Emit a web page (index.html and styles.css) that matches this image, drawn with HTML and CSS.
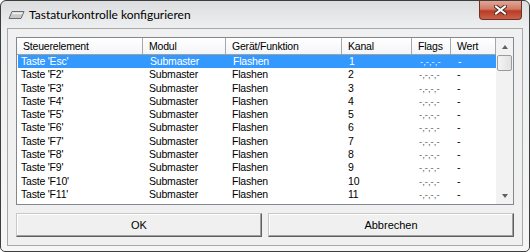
FILE: index.html
```html
<!DOCTYPE html>
<html>
<head>
    <title>Tastaturkontrolle konfigurieren</title>
    <meta charset="UTF-8" />
    <link rel="stylesheet" href="styles.css">
</head>
<body>
    <div class="window">
        <div class="titlebar">
            <svg class="app-icon" width="17" height="10" viewBox="0 0 17 10">
                <polygon points="4,1.5 16,1.5 13,8.5 1,8.5" fill="#c9c9c9" stroke="#6b6b6b" stroke-width="1"/>
                <polygon points="4.5,2.5 15,2.5 14.2,4.2 3.7,4.2" fill="#efefef"/>
            </svg>
            <span class="title">Tastaturkontrolle konfigurieren</span>
            <div class="close-btn">
                <svg width="13" height="10" viewBox="0 0 13 10">
                    <path d="M2 1.5 L11 8.5 M11 1.5 L2 8.5" stroke="#4a2a24" stroke-width="4" stroke-linecap="square"/>
                    <path d="M2 1.5 L11 8.5 M11 1.5 L2 8.5" stroke="#fff" stroke-width="2" stroke-linecap="square"/>
                </svg>
            </div>
        </div>

        <div class="client">
            <div class="listview">
                <div class="lv-main">
                    <div class="lv-header">
                        <div class="hcell">Steuerelement</div>
                        <div class="hcell">Modul</div>
                        <div class="hcell">Gerät/Funktion</div>
                        <div class="hcell">Kanal</div>
                        <div class="hcell">Flags</div>
                        <div class="hcell">Wert</div>
                    </div>
                    <div class="lv-rows" id="rows"></div>
                </div>
                <div class="scrollbar">
                    <div class="sb-btn"><span class="arrow-up"></span></div>
                    <div class="sb-thumb"></div>
                    <div class="sb-btn sb-down"><span class="arrow-down"></span></div>
                </div>
            </div>

            <div class="buttons">
                <button class="btn">OK</button>
                <button class="btn">Abbrechen</button>
            </div>
        </div>
    </div>

    <script>
        const keys = ["Esc", "F2", "F3", "F4", "F5", "F6", "F7", "F8", "F9", "F10", "F11"];
        const rows = document.getElementById("rows");

        keys.forEach((key, i) => {
            const row = document.createElement("div");
            row.className = i === 0 ? "row sel" : "row";
            row.innerHTML =
                "<div class='cell first'>Taste '" + key + "'</div>" +
                "<div class='cell'>Submaster</div>" +
                "<div class='cell'>Flashen</div>" +
                "<div class='cell'>" + (i + 1) + "</div>" +
                "<div class='cell flags'>-,-,-,-</div>" +
                "<div class='cell'>-</div>";
            rows.appendChild(row);
        });
    </script>
</body>
</html>
```

FILE: styles.css
```css
body {
    margin: 0;
    font-family: "Liberation Sans", Arial, sans-serif;
}

.window {
    width: 530px;
    height: 252px;
    box-sizing: border-box;
    border: 1px solid #3d3d3d;
    border-radius: 6px 6px 5px 5px;
    background: linear-gradient(#dcdddf, #eeeff0 27px, #f6f6f6);
    padding: 0 6px 5px 6px;
    display: flex;
    flex-direction: column;
}

.titlebar {
    height: 27px;
    flex: none;
    display: flex;
    align-items: center;
}

.app-icon {
    margin-left: 1px;
    margin-right: 4px;
    margin-top: 1px;
}

.title {
    font-family: Lato, "Noto Sans", sans-serif;
    font-size: 12px;
    color: #000;
    margin-top: -1px;
}

.close-btn {
    margin-left: auto;
    margin-right: 1px;
    align-self: flex-start;
    width: 43px;
    height: 19px;
    box-sizing: border-box;
    border: 1px solid #6e2f25;
    border-top: none;
    border-radius: 0 0 4px 4px;
    background: linear-gradient(#e3a596, #d07a66 45%, #bb3b25 55%, #c9614a);
    display: flex;
    align-items: center;
    justify-content: center;
}

.client {
    flex: 1;
    border: 1px solid #a8a8a8;
    background: #f0f0f0;
    padding: 8px;
    display: flex;
    flex-direction: column;
    gap: 8px;
}

.listview {
    height: 168px;
    flex: none;
    box-sizing: border-box;
    border: 1px solid #828790;
    background: #fff;
    display: flex;
    font-size: 10.5px;
    letter-spacing: -0.2px;
}

.lv-main {
    width: 479px;
    overflow: hidden;
}

.lv-header,
.row {
    display: grid;
    grid-template-columns: 126px 83px 116px 70px 39px 45px;
}

.lv-header {
    height: 17px;
    box-sizing: border-box;
    border-bottom: 1px solid #a0a0a0;
    background: linear-gradient(#ffffff, #f4f5f7);
}

.hcell {
    border-right: 1px solid #a7a7a7;
    padding-left: 6px;
    line-height: 16px;
    white-space: nowrap;
    overflow: hidden;
}

.row {
    height: 13.3px;
    line-height: 13.3px;
    color: #000;
}

.row.sel {
    background: #3399ff;
    color: #fff;
    margin-left: 1px;
}

.cell {
    padding-left: 6px;
    white-space: nowrap;
    overflow: hidden;
}

.cell.first {
    padding-left: 4px;
}

.row.sel .cell.first {
    padding-left: 3px;
}

.cell.flags {
    color: #606060;
    font-size: 9.5px;
    letter-spacing: 0;
    padding-left: 7px;
}

.row.sel .cell.flags {
    color: #e6f2ff;
}

.scrollbar {
    width: 17px;
    background: #f2f2f2;
    display: flex;
    flex-direction: column;
    align-items: center;
}

.sb-btn {
    width: 17px;
    height: 17px;
    display: flex;
    align-items: center;
    justify-content: center;
}

.sb-down {
    margin-top: auto;
}

.arrow-up {
    width: 0;
    height: 0;
    border-left: 3.5px solid transparent;
    border-right: 3.5px solid transparent;
    border-bottom: 4px solid #606060;
}

.arrow-down {
    width: 0;
    height: 0;
    border-left: 3.5px solid transparent;
    border-right: 3.5px solid transparent;
    border-top: 4px solid #606060;
}

.sb-thumb {
    width: 15px;
    height: 16px;
    box-sizing: border-box;
    border: 1px solid #9b9b9b;
    border-radius: 2px;
    background: linear-gradient(90deg, #f4f4f4, #e2e2e2);
}

.buttons {
    display: flex;
    gap: 6px;
}

.btn {
    flex: 1;
    height: 24px;
    margin: 0;
    background: #f0f0f0;
    border: 1px solid;
    border-color: #c8c8c8 #5f5f5f #5f5f5f #c8c8c8;
    box-shadow: inset -1px -1px #a0a0a0, inset 1px 1px #ffffff;
    font-family: "Liberation Sans", Arial, sans-serif;
    font-size: 11px;
    color: #000;
}
```
